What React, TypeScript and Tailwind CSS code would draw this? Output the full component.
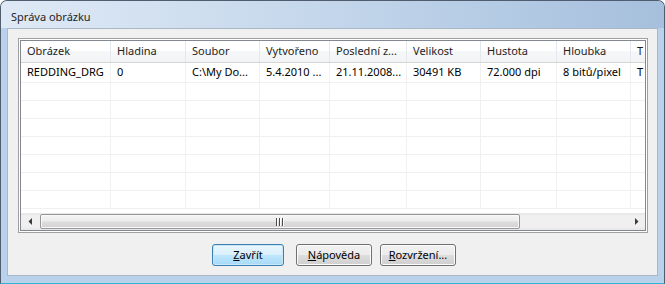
import React from "react";

const cols = [
  { c: "w-[90px]", h: "Obrázek", d: "REDDING_DRG" },
  { c: "w-[75px]", h: "Hladina", d: "0" },
  { c: "w-[74px]", h: "Soubor", d: "C:\\My Do..." },
  { c: "w-[70px]", h: "Vytvořeno", d: "5.4.2010 ..." },
  { c: "w-[77px]", h: "Poslední z...", d: "21.11.2008..." },
  { c: "w-[74px]", h: "Velikost", d: "30491 KB" },
  { c: "w-[76px]", h: "Hustota", d: "72.000 dpi" },
  { c: "w-[74px]", h: "Hloubka", d: "8 bitů/pixel" },
  { c: "w-[60px]", h: "T", d: "T" },
];

function Btn({ children, def, w }: { children: React.ReactNode; def?: boolean; w: string }) {
  return (
    <div
      className={
        "h-[22px] rounded-[3px] border flex items-center justify-center text-[11px] text-black " +
        w +
        (def
          ? " border-[#3c7fb1] bg-[linear-gradient(to_bottom,#eaf6fd_0%,#d9f0fc_50%,#bee6fd_51%,#a7d9f5_100%)] shadow-[inset_0_0_0_1px_#c8e8f8]"
          : " border-[#707070] bg-[linear-gradient(to_bottom,#f2f2f2_0%,#ebebeb_50%,#dddddd_51%,#cfcfcf_100%)] shadow-[inset_0_0_0_1px_#fcfcfc]")
      }
    >
      {children}
    </div>
  );
}

export default function App() {
  const empty = [0, 1, 2, 3, 4, 5, 6];
  return (
    <div className="w-[665px] h-[284px] flex flex-col border border-[#4f5d6e] border-b-[#2fb6d6] rounded-t-[7px] bg-[#b9d1ea] overflow-hidden font-['Noto_Sans',sans-serif]">
      {/* title bar */}
      <div className="h-[27px] shrink-0 pl-[10px] pt-[8px] text-[11px] leading-[15px] text-[#1e1e1e] bg-[linear-gradient(to_right,#dfe9f5_0%,#c9daed_40%,#b4cbe4_75%,#a6bfdc_100%)]">
        Správa obrázku
      </div>
      {/* content */}
      <div className="mx-[6px] mb-[7px] flex-1 border border-[#a9b8c9] bg-[#f0f0f0] flex flex-col">
        {/* list view */}
        <div className="ml-[10px] mr-[9px] mt-[9px] h-[195px] border border-[#a0a0a0] bg-white p-px">
          <div className="h-full border border-[#828790] flex flex-col bg-white overflow-hidden">
            {/* header */}
            <div className="h-[22px] shrink-0 flex border-b border-[#d5d5d5] bg-[linear-gradient(to_bottom,#ffffff_0%,#ffffff_45%,#f6f7f8_50%,#f2f3f5_100%)]">
              {cols.map((col, i) => (
                <div
                  key={i}
                  className={col.c + " shrink-0 border-r border-[#e3e8ee] pl-[6px] flex items-center text-[11px] text-[#1e1e1e] whitespace-nowrap overflow-hidden"}
                >
                  {col.h}
                </div>
              ))}
            </div>
            {/* body */}
            <div className="flex-1 overflow-hidden">
              <div className="h-[20px] flex border-b border-[#f0f0f0]">
                {cols.map((col, i) => (
                  <div
                    key={i}
                    className={col.c + " shrink-0 border-r border-[#f0f0f0] pl-[6px] flex items-center text-[11px] text-black whitespace-nowrap overflow-hidden"}
                  >
                    {col.d}
                  </div>
                ))}
              </div>
              {empty.map((r) => (
                <div key={r} className="h-[18px] flex border-b border-[#f0f0f0]">
                  {cols.map((col, i) => (
                    <div key={i} className={col.c + " shrink-0 border-r border-[#f0f0f0]"} />
                  ))}
                </div>
              ))}
            </div>
            {/* horizontal scrollbar */}
            <div className="h-[17px] shrink-0 flex items-center bg-[linear-gradient(to_bottom,#e6e6e6_0%,#f0f0f0_20%,#f0f0f0_80%,#e6e6e6_100%)]">
              <div className="w-[17px] h-[17px] flex items-center justify-center">
                <svg width="4" height="7" viewBox="0 0 4 7">
                  <path d="M4 0 L0.5 3.5 L4 7 Z" fill="#3c3c3c" />
                </svg>
              </div>
              <div className="ml-[2px] w-[480px] h-[15px] rounded-[2px] border border-[#979797] bg-[linear-gradient(to_bottom,#f5f5f5_0%,#ececec_45%,#dcdcdc_55%,#d3d3d3_100%)] shadow-[inset_0_0_0_1px_#f8f8f8] flex items-center justify-center">
                <svg width="8" height="8" viewBox="0 0 8 8">
                  <rect x="0" y="0" width="1" height="8" fill="#4a4a4a" />
                  <rect x="1" y="0" width="1" height="8" fill="#ffffff" />
                  <rect x="3" y="0" width="1" height="8" fill="#4a4a4a" />
                  <rect x="4" y="0" width="1" height="8" fill="#ffffff" />
                  <rect x="6" y="0" width="1" height="8" fill="#4a4a4a" />
                  <rect x="7" y="0" width="1" height="8" fill="#ffffff" />
                </svg>
              </div>
              <div className="flex-1" />
              <div className="w-[17px] h-[17px] flex items-center justify-center">
                <svg width="4" height="7" viewBox="0 0 4 7">
                  <path d="M0 0 L3.5 3.5 L0 7 Z" fill="#3c3c3c" />
                </svg>
              </div>
            </div>
          </div>
        </div>
        {/* buttons */}
        <div className="mt-[11px] flex pl-[204px]">
          <Btn def w="w-[72px]">
            <span>
              <span className="underline">Z</span>avřít
            </span>
          </Btn>
          <div className="w-[12px]" />
          <Btn w="w-[76px]">
            <span>
              <span className="underline">N</span>ápověda
            </span>
          </Btn>
          <div className="w-[8px]" />
          <Btn w="w-[76px]">
            <span>
              <span className="underline">R</span>ozvržení...
            </span>
          </Btn>
        </div>
      </div>
    </div>
  );
}
